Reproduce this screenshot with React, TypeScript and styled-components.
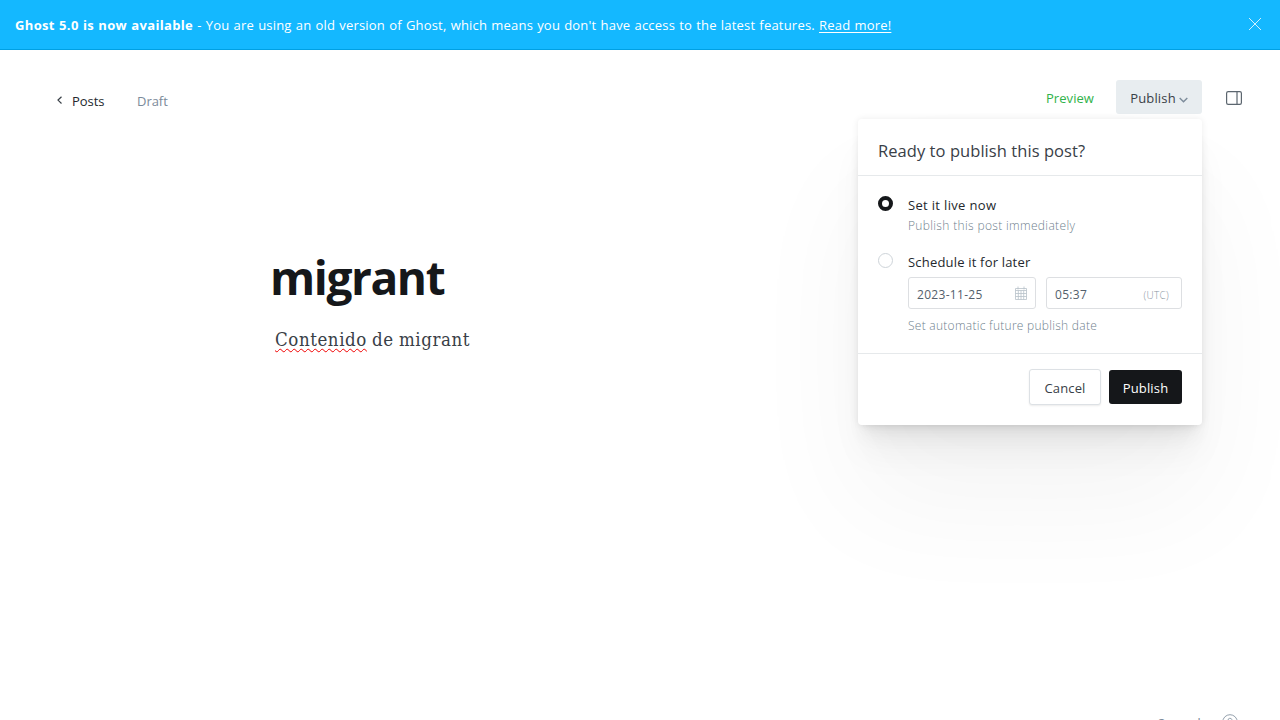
import React from 'react';
import styled, { createGlobalStyle, css } from 'styled-components';

const GlobalStyle = createGlobalStyle`
  *, *::before, *::after { box-sizing: border-box; }
  body {
    margin: 0;
    overflow: hidden;
    background: #fff;
    color: #394047;
    font-family: "Open Sans", "Noto Sans", sans-serif;
    font-size: 13px;
    line-height: 20px;
  }
`;

const Page = styled.div`
  height: 720px;
  display: flex;
  flex-direction: column;
  overflow: hidden;
`;

const Banner = styled.div`
  flex: none;
  height: 50px;
  padding: 0 18px 0 15px;
  display: flex;
  align-items: center;
  justify-content: space-between;
  background: #14b8ff;
  border-bottom: 1px solid #00a0e3;
  color: #fff;
  svg { margin-top: -2px; }
`;

const BannerText = styled.div`
  white-space: nowrap;
  font-size: 13px;
  letter-spacing: 0.2px;
  word-spacing: 0.55px;
  a { color: inherit; text-decoration: underline; text-underline-offset: 2px; }
  b { font-weight: 700; letter-spacing: 0.34px; }
`;

const Header = styled.header`
  position: relative;
  z-index: 1;
  flex: none;
  height: 94px;
  padding: 30px 37px 0 56px;
  display: flex;
  justify-content: space-between;
  align-items: flex-start;
`;

const Group = styled.div<{ $top?: number }>`
  display: flex;
  align-items: center;
  height: 34px;
  margin-top: ${p => p.$top ?? 0}px;
`;

const Back = styled.a`
  display: flex;
  align-items: center;
  gap: 8px;
  width: 81px;
  color: #24282d;
  letter-spacing: -0.05px;
  svg { margin-top: -2px; }
`;

const Status = styled.span`
  color: #7c8b9a;
  letter-spacing: -0.05px;
`;

const Preview = styled.a`
  color: #30b24a;
  margin-right: 22px;
  padding-top: 2px;
  width: 48px;
  white-space: nowrap;
  letter-spacing: 0.05px;
`;

const Trigger = styled.button`
  font: inherit;
  color: #394047;
  display: flex;
  align-items: center;
  justify-content: center;
  gap: 3px;
  width: 86px;
  height: 34px;
  padding: 2px 0 0;
  border: 0;
  border-radius: 3px;
  background: #e8edf0;
  margin-right: 23px;
  letter-spacing: 0.15px;
  svg { margin-top: 4px; }
`;

const PanelIcon = styled.svg`
  margin-top: 2px;
`;

const Menu = styled.section`
  position: absolute;
  top: 69px;
  right: 78px;
  width: 344px;
  height: 306px;
  background: #fff;
  border-radius: 4px;
  box-shadow:
    0 0 7px rgba(0, 0, 0, 0.08),
    0 2.1px 2.2px -5px rgba(0, 0, 0, 0.022),
    0 5.1px 5.3px -5px rgba(0, 0, 0, 0.032),
    0 9.5px 10px -5px rgba(0, 0, 0, 0.04),
    0 17px 17.9px -5px rgba(0, 0, 0, 0.044),
    0 31.8px 33.4px -5px rgba(0, 0, 0, 0.05),
    0 76px 120px 4px rgba(0, 0, 0, 0.045);
`;

const MenuTitle = styled.h2`
  margin: 0;
  height: 57px;
  padding: 21px 20px 0;
  border-bottom: 1px solid #e6e9eb;
  font-size: 16.5px;
  font-weight: 400;
  line-height: 22px;
  letter-spacing: 0.06px;
`;

const MenuBody = styled.div`
  height: 178px;
  padding: 19px 20px 0;
  border-bottom: 1px solid #e6e9eb;
`;

const Option = styled.div<{ $height: number }>`
  display: flex;
  gap: 15px;
  height: ${p => p.$height}px;
`;

const Radio = styled.span<{ $checked?: boolean }>`
  flex: none;
  width: 15px;
  height: 15px;
  margin-top: 1px;
  border-radius: 50%;
  border: 1px solid #ced4d9;
  ${p => p.$checked && css`border: 4px solid #15171a;`}
`;

const OptionContent = styled.div`
  flex: 1;
`;

const OptionLabel = styled.div<{ $spacing: number }>`
  color: #24282d;
  line-height: 20px;
  letter-spacing: ${p => p.$spacing}px;
`;

const Hint = styled.div<{ $spacing: number; $top?: number }>`
  font-size: 12px;
  line-height: 20px;
  font-weight: 300;
  color: #6f7f8e;
  padding-top: ${p => p.$top ?? 0}px;
  letter-spacing: ${p => p.$spacing}px;
`;

const Fields = styled.div`
  display: flex;
  gap: 10px;
  margin: 5px 0 7px;
`;

const Field = styled.div<{ $width: number; $right: number }>`
  display: flex;
  align-items: center;
  justify-content: space-between;
  width: ${p => p.$width}px;
  height: 32px;
  padding: 3px ${p => p.$right}px 0 8px;
  border: 1px solid #dddfe2;
  border-radius: 3px;
  font-size: 12px;
  color: #54606c;
  letter-spacing: 0.3px;
  svg { margin-top: -4px; }
`;

const Zone = styled.span`
  font-size: 10px;
  font-weight: 300;
  color: #8894a0;
`;

const MenuFooter = styled.div`
  display: flex;
  justify-content: flex-end;
  align-items: center;
  gap: 8px;
  padding: 15px 20px 0;
`;

const Button = styled.button<{ $primary?: boolean }>`
  font: inherit;
  letter-spacing: 0.15px;
  width: ${p => (p.$primary ? 73 : 72)}px;
  height: ${p => (p.$primary ? 34 : 36)}px;
  padding: 2px 0 0;
  border-radius: 3px;
  border: ${p => (p.$primary ? '0' : '1px solid #dde1e5')};
  background: ${p => (p.$primary ? '#15171a' : '#fff')};
  color: ${p => (p.$primary ? '#fff' : '#394047')};
  box-shadow: ${p => (p.$primary ? 'none' : '0 1px 2px rgba(0, 0, 0, 0.08)')};
`;

const Editor = styled.main`
  flex: 1;
  padding: 105px 0 0 270px;
`;

const Title = styled.h1`
  margin: 0;
  font-size: 46px;
  line-height: 56px;
  font-weight: 700;
  letter-spacing: -1.4px;
  color: #15171a;
`;

const Content = styled.p`
  margin: 21px 0 0 5px;
  font-family: "DejaVu Serif Condensed", "DejaVu Serif", serif;
  font-stretch: condensed;
  font-size: 18.5px;
  line-height: 28px;
  letter-spacing: 0.57px;
  word-spacing: -0.6px;
`;

const Misspelled = styled.span`
  text-decoration: underline wavy #f00000 1px;
  text-decoration-skip-ink: none;
  text-underline-offset: 2px;
`;

const StatusBar = styled.footer`
  flex: none;
  height: 8px;
  padding-right: 42px;
  display: flex;
  justify-content: flex-end;
  align-items: flex-start;
  gap: 15px;
  color: #7c8b9a;
  letter-spacing: 0.1px;
  span { padding-top: 1px; }
  svg { margin-top: 2px; }
`;

const App = () => (
  <Page>
    <GlobalStyle />
    <Banner>
      <BannerText>
        <b>Ghost 5.0 is now available</b> - You are using an old version of Ghost, which means you don't have access to the latest features. <a>Read more!</a>
      </BannerText>
      <svg width="14" height="14" viewBox="0 0 14 14" stroke="#fff" strokeWidth="0.8">
        <path d="M1 1l12 12M13 1L1 13" />
      </svg>
    </Banner>
    <Header>
      <Group $top={4}>
        <Back>
          <svg width="8" height="10" viewBox="0 0 8 10" fill="none" stroke="#394047" strokeWidth="1.2">
            <path d="M5.5 1.7L2 5.1l3.5 3.4" />
          </svg>
          Posts
        </Back>
        <Status>Draft</Status>
      </Group>
      <Group>
        <Preview>Preview</Preview>
        <Trigger>
          Publish
          <svg width="9" height="6" viewBox="0 0 9 6" fill="none" stroke="#7c8b9a" strokeWidth="1.4">
            <path d="M0.7 1L4.5 4.8 8.3 1" />
          </svg>
        </Trigger>
        <PanelIcon width="18" height="16" viewBox="0 0 18 16" fill="none" stroke="#5c666f" strokeWidth="1.2">
          <rect x="1.6" y="1.6" width="14.8" height="12.8" rx="1.6" />
          <path d="M12 1.6v12.8" />
        </PanelIcon>
      </Group>
      <Menu>
        <MenuTitle>Ready to publish this post?</MenuTitle>
        <MenuBody>
          <Option $height={57}>
            <Radio $checked />
            <OptionContent>
              <OptionLabel $spacing={0.33}>Set it live now</OptionLabel>
              <Hint $spacing={0.34} $top={1}>Publish this post immediately</Hint>
            </OptionContent>
          </Option>
          <Option $height={101}>
            <Radio />
            <OptionContent>
              <OptionLabel $spacing={0.19}>Schedule it for later</OptionLabel>
              <Fields>
                <Field $width={128} $right={8}>
                  2023-11-25
                  <svg width="12" height="14" viewBox="0 0 12 14" fill="none" stroke="#b8c1c9" strokeWidth="0.8">
                    <path d="M.5 2.5h11v11H.5zM.5 4.5h11M.5 7.5h11M.5 10.5h11M3.3 4.5v9M6 4.5v9M8.7 4.5v9M3 .5v3M9 .5v3" />
                  </svg>
                </Field>
                <Field $width={136} $right={12}>
                  05:37
                  <Zone>(UTC)</Zone>
                </Field>
              </Fields>
              <Hint $spacing={0.27}>Set automatic future publish date</Hint>
            </OptionContent>
          </Option>
        </MenuBody>
        <MenuFooter>
          <Button>Cancel</Button>
          <Button $primary>Publish</Button>
        </MenuFooter>
      </Menu>
    </Header>
    <Editor>
      <Title>migrant</Title>
      <Content><Misspelled>Contenido</Misspelled> de migrant</Content>
    </Editor>
    <StatusBar>
      <span>3 words</span>
      <svg width="16" height="16" viewBox="0 0 16 16" fill="none" stroke="#95a1ad" strokeWidth="1">
        <circle cx="8" cy="8" r="7.3" />
        <path d="M6 6.2a2 2 0 1 1 2.8 1.9c-.6.3-.8.6-.8 1.4M8 11v1" />
      </svg>
    </StatusBar>
  </Page>
);

export default App;
